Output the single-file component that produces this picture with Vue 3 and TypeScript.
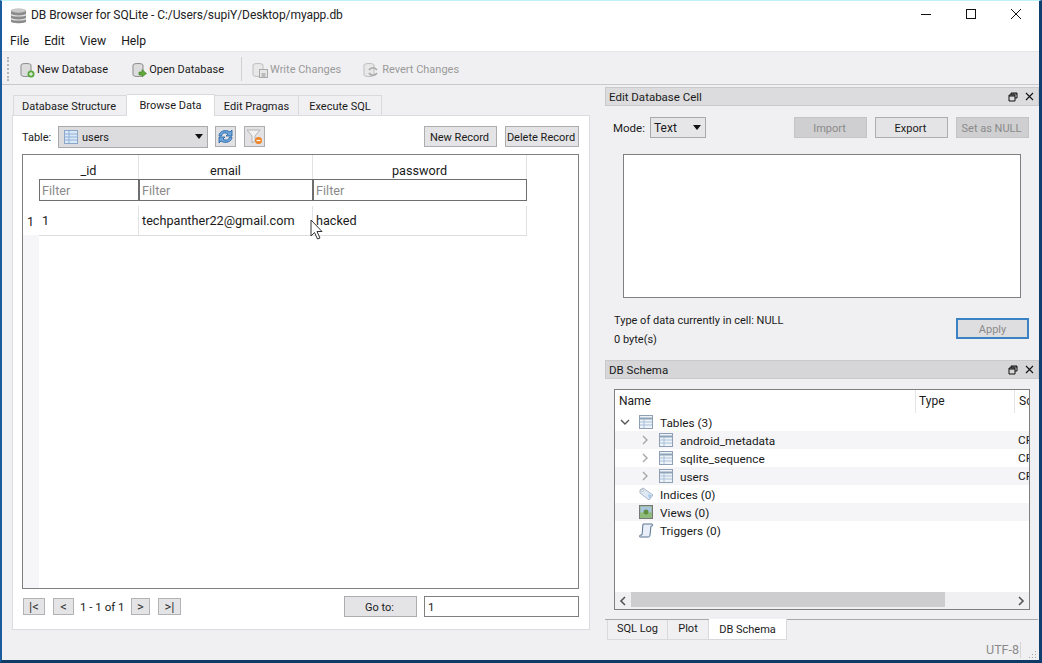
<script setup lang="ts">
const menus: string[] = ['File', 'Edit', 'View', 'Help']
const tabs = [
  { label: 'Database Structure', w: 114, on: false },
  { label: 'Browse Data', w: 88, on: true },
  { label: 'Edit Pragmas', w: 84, on: false },
  { label: 'Execute SQL', w: 83, on: false },
]
const children: string[] = ['android_metadata', 'sqlite_sequence', 'users']
</script>

<template>
  <div class="win">
    <header class="title">
      <svg class="appicon" width="17" height="18" viewBox="0 0 17 18">
        <path d="M1 3.500C1 1.800 16 1.800 16 3.500V14.500C16 16.800 1 16.800 1 14.500Z" fill="#8b8b8b" />
        <ellipse cx="8.500" cy="3.500" rx="7.500" ry="2.200" fill="#c9c9c9" />
        <path d="M1 7.500C3 9.500 14 9.500 16 7.500M1 11.500C3 13.500 14 13.500 16 11.500" stroke="#e4e4e4" stroke-width="1.200" fill="none" />
      </svg>
      <span class="titletext">DB Browser for SQLite - C:/Users/supiY/Desktop/myapp.db</span>
      <div class="winctl">
        <svg width="12" height="12" viewBox="0 0 12 12"><path d="M1 6.500H11" stroke="#111" stroke-width="1" /></svg>
        <svg width="12" height="12" viewBox="0 0 12 12"><rect x="1.500" y="1.500" width="9" height="9" fill="none" stroke="#111" /></svg>
        <svg width="12" height="12" viewBox="0 0 12 12"><path d="M1 1L11 11M11 1L1 11" stroke="#111" stroke-width="1" /></svg>
      </div>
    </header>

    <nav class="menu">
      <span v-for="m in menus" :key="m">{{ m }}</span>
    </nav>

    <div class="toolbar">
      <i class="grip"></i>
      <span class="tool t1">
        <svg width="15" height="16" viewBox="0 0 15 16">
          <path d="M1 3C1 1 11 1 11 3V13C11 15 1 15 1 13Z" fill="#dcdcdc" stroke="#8a8a8a" />
          <circle cx="11" cy="12" r="3.500" fill="#58a83f" />
          <path d="M9 12H13M11 10V14" stroke="#fff" />
        </svg>
        New Database
      </span>
      <span class="tool t2">
        <svg width="15" height="16" viewBox="0 0 15 16">
          <path d="M1 3C1 1 11 1 11 3V13C11 15 1 15 1 13Z" fill="#dcdcdc" stroke="#8a8a8a" />
          <path d="M7 10H10V7.500L14.500 11.500L10 15V13H7Z" fill="#62a83c" stroke="#3f7d28" stroke-width=".6" />
        </svg>
        Open Database
      </span>
      <i class="sep"></i>
      <span class="tool t3 off">
        <svg width="16" height="16" viewBox="0 0 16 16">
          <path d="M1 3C1 1 11 1 11 3V13C11 15 1 15 1 13Z" fill="#e8e8e8" stroke="#bdbdbd" />
          <rect x="7.500" y="7.500" width="8" height="8" fill="#e6e6e6" stroke="#aaa" />
          <rect x="9.500" y="11" width="4" height="4" fill="#bbb" />
        </svg>
        Write Changes
      </span>
      <span class="tool t4 off">
        <svg width="16" height="16" viewBox="0 0 16 16">
          <path d="M1 3C1 1 11 1 11 3V13C11 15 1 15 1 13Z" fill="#e8e8e8" stroke="#bdbdbd" />
          <path d="M6 8C8 5 12 5 14 8M14 11C12 14 8 14 6 11" fill="none" stroke="#a8a8a8" stroke-width="1.600" />
        </svg>
        Revert Changes
      </span>
    </div>

    <main class="body">
      <section class="left">
        <div class="tabs">
          <span v-for="t in tabs" :key="t.label" class="tab" :class="{ on: t.on }" :style="{ width: t.w + 'px' }">{{ t.label }}</span>
        </div>
        <div class="panel">
          <div class="controls">
            <label>Table:</label>
            <div class="combo tablecombo">
              <svg width="14" height="14" viewBox="0 0 14 14">
                <rect x=".5" y=".5" width="13" height="13" fill="#dbe8f7" stroke="#8aa6c8" />
                <path d="M1 4H13M1 7H13M1 10H13M5 1V13" stroke="#8fb0d8" />
              </svg>
              <span>users</span>
              <b class="caret"></b>
            </div>
            <button class="sq refresh">
              <svg width="17" height="17" viewBox="0 0 17 17">
                <path d="M2 8C2 3 9 1 13 4L15 2V8H9L11 6C8 4 5 5 4.500 8Z" fill="#6ea6de" stroke="#215f9f" stroke-width=".8" />
                <path d="M15 9C15 14 8 16 4 13L2 15V9H8L6 11C9 13 12 12 12.500 9Z" fill="#6ea6de" stroke="#215f9f" stroke-width=".8" />
              </svg>
            </button>
            <button class="sq clear">
              <svg width="17" height="17" viewBox="0 0 17 17">
                <path d="M1 2H14L9 8V13L6 15V8Z" fill="#f1f1f1" stroke="#b5b5b5" />
                <circle cx="12.500" cy="12.500" r="3.500" fill="#ee8326" />
                <path d="M10.500 12.500H14.500" stroke="#fff" stroke-width="1.300" />
              </svg>
            </button>
            <button class="btn rec1">New Record</button>
            <button class="btn rec2">Delete Record</button>
          </div>

          <div class="frame">
            <div class="rowhead">
              <div class="rh-top"></div>
              <div class="rh-one">1</div>
            </div>
            <div class="grid">
              <div class="hcell">_id</div>
              <div class="hcell">email</div>
              <div class="hcell">password</div>
              <div class="fcell">Filter</div>
              <div class="fcell">Filter</div>
              <div class="fcell">Filter</div>
              <div class="gap"></div>
              <div class="dcell">1</div>
              <div class="dcell">techpanther22@gmail.com</div>
              <div class="dcell">hacked</div>
            </div>
            <svg class="cursor" width="13" height="21" viewBox="0 0 13 21">
              <path d="M1 1V17L4.500 13.500L7.500 20L10 19L7 12.500H12Z" fill="#fff" stroke="#333" stroke-width="1" />
            </svg>
          </div>

          <div class="pager">
            <button class="pg p1">|&lt;</button>
            <button class="pg p2">&lt;</button>
            <span class="count">1 - 1 of 1</span>
            <button class="pg p3">&gt;</button>
            <button class="pg p4">&gt;|</button>
            <button class="btn goto">Go to:</button>
            <div class="gotoinput">1</div>
          </div>
        </div>
      </section>

      <aside class="right">
        <div class="dockhead">
          <span>Edit Database Cell</span>
          <span class="dockctl">
            <svg width="10" height="10" viewBox="0 0 10 10"><path d="M3 3V1H9V6H7M1 3H7V9H1Z M1 4H7M3 2H9" fill="none" stroke="#111" /></svg>
            <svg width="9" height="9" viewBox="0 0 9 9"><path d="M1 1L8 8M8 1L1 8" stroke="#111" stroke-width="1.100" /></svg>
          </span>
        </div>
        <div class="moderow">
          <label>Mode:</label>
          <div class="combo modecombo"><span>Text</span><b class="caret"></b></div>
          <button class="btn cellbtn dis push">Import</button>
          <button class="btn cellbtn">Export</button>
          <button class="btn cellbtn dis">Set as NULL</button>
        </div>
        <div class="editor"></div>
        <div class="inforow">
          <div class="infotext">
            <div>Type of data currently in cell: NULL</div>
            <div>0 byte(s)</div>
          </div>
          <button class="btn apply">Apply</button>
        </div>

        <div class="dockhead schema">
          <span>DB Schema</span>
          <span class="dockctl">
            <svg width="10" height="10" viewBox="0 0 10 10"><path d="M3 3V1H9V6H7M1 3H7V9H1Z M1 4H7M3 2H9" fill="none" stroke="#111" /></svg>
            <svg width="9" height="9" viewBox="0 0 9 9"><path d="M1 1L8 8M8 1L1 8" stroke="#111" stroke-width="1.100" /></svg>
          </span>
        </div>
        <div class="tree">
          <div class="treehead">
            <span class="th-name">Name</span>
            <span class="th-type">Type</span>
            <span class="th-sc">Sc</span>
          </div>
          <div class="treebody">
            <div class="node">
              <svg class="arrow" width="10" height="10" viewBox="0 0 10 10"><path d="M1 3L5 7L9 3" fill="none" stroke="#555" stroke-width="1.400" /></svg>
              <svg class="ticon" width="14" height="14" viewBox="0 0 14 14">
                <rect x=".5" y=".5" width="13" height="13" fill="#eef3f8" stroke="#8f9fb5" />
                <path d="M1 3.500H13" stroke="#8fa3b8" stroke-width="2" />
                <path d="M1 7H13M1 10H13M5 4V13" stroke="#a9c0d8" />
              </svg>
              <span>Tables (3)</span>
            </div>
            <div v-for="(c, i) in children" :key="c" class="node child" :class="{ alt: i !== 1 }">
              <svg class="arrow" width="10" height="10" viewBox="0 0 10 10"><path d="M3 1L7 5L3 9" fill="none" stroke="#a6a6a6" stroke-width="1.400" /></svg>
              <svg class="ticon" width="14" height="14" viewBox="0 0 14 14">
                <rect x=".5" y=".5" width="13" height="13" fill="#eef3f8" stroke="#8f9fb5" />
                <path d="M1 3.500H13" stroke="#8fa3b8" stroke-width="2" />
                <path d="M1 7H13M1 10H13M5 4V13" stroke="#a9c0d8" />
              </svg>
              <span>{{ c }}</span>
              <em>CF</em>
            </div>
            <div class="node">
              <i class="arrow blank"></i>
              <svg class="ticon wide" width="15" height="14" viewBox="0 0 15 14">
                <path d="M1 3L4 1L14 8L10 13L1 6Z" fill="#dfe9f5" stroke="#a9b8c8" />
                <path d="M9 7L13 8.500L10 12Z" fill="#a9c8ea" />
                <circle cx="3.500" cy="3.500" r="1" fill="#fff" stroke="#999" stroke-width=".5" />
              </svg>
              <span>Indices (0)</span>
            </div>
            <div class="node alt">
              <i class="arrow blank"></i>
              <svg class="ticon" width="14" height="14" viewBox="0 0 14 14">
                <rect x=".5" y=".5" width="13" height="13" fill="#8fbb7a" stroke="#777" />
                <rect x="1.500" y="1.500" width="11" height="6" fill="#a9c4dc" />
                <circle cx="7" cy="7" r="2.500" fill="#5f8f3f" />
              </svg>
              <span>Views (0)</span>
            </div>
            <div class="node">
              <i class="arrow blank"></i>
              <svg class="ticon wide" width="15" height="15" viewBox="0 0 15 15">
                <path d="M4 1H13C14 1 14 3 13 3H12L11 12C11 14 10 14 9 14H1C0 14 0 12 2 12H3Z" fill="#e8eff8" stroke="#5a7391" />
              </svg>
              <span>Triggers (0)</span>
            </div>
          </div>
          <div class="hscroll">
            <svg width="16" height="16" viewBox="0 0 16 16"><path d="M10 4L6 8L10 12" fill="none" stroke="#555" stroke-width="1.600" /></svg>
            <div class="track"><div class="thumb"></div></div>
            <svg width="16" height="16" viewBox="0 0 16 16"><path d="M6 4L10 8L6 12" fill="none" stroke="#555" stroke-width="1.600" /></svg>
          </div>
        </div>
        <div class="dtabs">
          <span class="dtab d1">SQL Log</span>
          <span class="dtab d2">Plot</span>
          <span class="dtab d3">DB Schema</span>
        </div>
      </aside>
    </main>

    <footer class="status">
      <span class="enc">UTF-8</span>
      <svg width="9" height="9" viewBox="0 0 9 9" class="sizegrip">
        <path d="M7 1h1v1H7zM4 4h1v1H4zM7 4h1v1H7zM1 7h1v1H1zM4 7h1v1H4zM7 7h1v1H7z" fill="#a9a9a9" />
      </svg>
    </footer>
  </div>
</template>

<style scoped>
* { box-sizing: border-box; }
.win {
  width: 1042px; height: 663px; overflow: hidden; position: relative;
  display: flex; flex-direction: column;
  background: #f0f0f2;
  border-top: 1px solid #bdf2f6;
  border-left: 2px solid #1c5c9e;
  border-right: 3px solid #0e3f6e;
  border-bottom: 3px solid #0d3b66;
  font-family: Roboto, "Noto Sans", sans-serif;
  font-size: 12px;
  color: #1a1a1a;
}
.title {
  height: 29px; flex: none; background: #fff;
  display: flex; align-items: center; padding-left: 8px;
}
.appicon { margin-right: 4px; }
.titletext { font-size: 12px; letter-spacing: -.06px; color: #222; margin-top: -1px; }
.winctl { margin-left: auto; display: flex; gap: 33px; padding-right: 17px; margin-top: -3px; }
.menu {
  height: 21px; flex: none; background: #fff;
  display: flex; align-items: center; padding-left: 8px; gap: 15px;
  font-size: 12.200px; padding-top: 1px;
}
.toolbar {
  height: 34px; flex: none; position: relative;
  display: flex; align-items: center;
  border-top: 1px solid #e6e6e8;
  border-bottom: 1px solid #c9c9cb;
  font-size: 11px; padding-top: 3px;
}
.grip { width: 2px; height: 24px; margin-left: 5px; margin-top: -2px; border-left: 2px dotted #b5b5b5; }
.tool { display: flex; align-items: center; gap: 2px; white-space: nowrap; }
.t1 { margin-left: 11px; }
.t2 { margin-left: 24px; }
.sep { width: 1px; height: 24px; background: #d0d0d2; margin-left: 17px; margin-top: -2px; }
.t3 { margin-left: 10px; }
.t4 { margin-left: 22px; gap: 3px; }
.off { color: #9a9a9a; }

.body { flex: 1; display: flex; min-height: 0; }
.left { width: 603px; flex: none; padding: 9px 0 0 10px; }
.tabs { display: flex; padding-left: 1px; height: 21px; align-items: flex-end; }
.tab {
  height: 20px; display: flex; align-items: center; justify-content: center;
  background: #f0f0f2; border: 1px solid #d9d9db; border-bottom: none; border-left: none;
  font-size: 11px; padding-top: 1px;
}
.tab:first-child { border-left: 1px solid #d9d9db; padding-right: 2px; }
.tab.on { height: 22px; background: #fff; border-left: none; margin-bottom: -1px; padding-top: 0; padding-bottom: 1px; position: relative; z-index: 1; }
.panel {
  width: 578px; height: 515px; background: #fff; border: 1px solid #dcdcde;
  padding: 9px 10px 0 9px; display: flex; flex-direction: column;
}
.controls { height: 23px; display: flex; align-items: center; font-size: 11px; flex: none; }
.controls label { width: 36px; padding-top: 1px; }
.combo {
  display: flex; align-items: center; background: #e2e2e4; border: 1px solid #a9a9ab;
  position: relative;
}
.tablecombo { width: 150px; height: 22px; padding-left: 5px; gap: 4px; background: #dcdcde; }
.tablecombo span { padding-top: 1px; }
.modecombo { width: 56px; height: 21px; padding-left: 3px; background: #e6e6e8; font-size: 12px; }
.caret {
  position: absolute; right: 4px; top: 7px; width: 0; height: 0;
  border-left: 4px solid transparent; border-right: 4px solid transparent; border-top: 5px solid #111;
}
.sq {
  width: 21px; height: 21px; padding: 0; margin: 0;
  background: #e2e2e4; border: 1px solid #adadaf;
  display: flex; align-items: center; justify-content: center;
}
.refresh { margin-left: 7px; }
.clear { margin-left: 8px; }
.btn {
  height: 21px; padding: 1px 2px 0 0; background: #e4e4e6; border: 1px solid #adadaf;
  font: inherit; font-size: 11px; color: #1a1a1a; white-space: nowrap;
}
.rec1 { width: 73px; margin-left: auto; }
.rec2 { width: 74px; margin-left: 8px; }

.frame {
  width: 557px; height: 435px; flex: none; margin-top: 6px;
  border: 1px solid #7f7f7f; display: flex; position: relative;
}
.rowhead { width: 16px; flex: none; background: #f6f6f8; }
.rh-top { height: 51px; background: #fff; }
.rh-one { height: 29px; background: #fff; display: flex; align-items: center; justify-content: center; font-size: 12.500px; padding-top: 1px; padding-right: 1px; }
.grid {
  display: grid; grid-template-columns: 100px 174px 214px;
  grid-template-rows: 24px 22px 5px 30px; align-content: start; height: 81px;
  font-size: 12.650px;
}
.hcell {
  display: flex; align-items: flex-end; justify-content: center;
  border-right: 1px solid #e2e2e4; line-height: 17px;
}
.fcell {
  border: 1px solid #6e6e6e; padding-left: 2px; display: flex; align-items: center;
  color: #8a8a8a; background: #fff;
}
.gap { grid-column: 1 / 4; }
.dcell {
  display: flex; align-items: center; padding-left: 3px;
  border-right: 1px solid #e2e2e4; border-bottom: 1px solid #dedee0; white-space: nowrap;
}
.cursor { position: absolute; left: 287px; top: 64px; }

.pager { display: flex; align-items: center; height: 21px; margin-top: 7px; padding-left: 1px; flex: none; font-size: 11.500px; }
.pg {
  height: 17px; padding: 0; background: #e4e4e6; border: 1px solid #b3b3b5;
  font: inherit; font-size: 13px; line-height: 13px; color: #333;
}
.p1 { width: 22px; }
.p2 { width: 21px; margin-left: 8px; }
.count { width: 45px; margin-left: 6px; white-space: nowrap; }
.p3 { width: 19px; margin-left: 6px; }
.p4 { width: 23px; margin-left: 8px; }
.goto { width: 73px; margin-left: 163px; }
.gotoinput {
  width: 155px; height: 21px; margin-left: 7px; border: 1px solid #7f7f7f; background: #fff;
  display: flex; align-items: center; padding-left: 3px; font-size: 11.500px;
}

.right { flex: 1; padding: 2px 0 0 0; display: flex; flex-direction: column; min-width: 0; }
.dockhead {
  height: 19px; flex: none; background: #dcdcde; border: 1px solid #c9c9cb;
  display: flex; align-items: center; justify-content: space-between; padding: 0 3px;
  font-size: 11.500px;
}
.schema { background: #d6d6d8; margin-top: 10px; }
.dockctl { display: flex; align-items: center; gap: 7px; padding-right: 1px; }
.moderow { height: 21px; margin-top: 11px; display: flex; align-items: center; padding-left: 8px; padding-right: 10px; flex: none; font-size: 11.500px; }
.moderow label { width: 37px; }
.cellbtn { width: 73px; margin-left: 8px; }
.cellbtn.push { margin-left: auto; }
.dis { background: #cfcfd1; color: #8a8a8a; border-color: #c4c4c6; }
.editor { width: 398px; height: 144px; flex: none; margin: 16px 0 0 18px; border: 1px solid #7f7f7f; background: #fff; }
.inforow { height: 41px; flex: none; margin-top: 11px; display: flex; padding-left: 9px; padding-right: 10px; justify-content: space-between; font-size: 11px; }
.infotext { display: flex; flex-direction: column; gap: 2px; line-height: 17px; margin-top: 3px; }
.apply {
  width: 73px; height: 21px; margin-top: 9px; padding: 1px 0 0; background: #dedee0; border: 2px solid #3b82c4; color: #8a8a8a;
}
.tree {
  width: 416px; height: 221px; flex: none; margin: 10px 0 0 9px; border: 1px solid #7f7f7f; background: #fff;
  display: flex; flex-direction: column; font-size: 12px;
}
.treehead { height: 23px; flex: none; display: flex; align-items: center; position: relative; }
.treehead span { position: absolute; top: 4px; }
.th-name { left: 4px; }
.th-type { left: 304px; }
.th-type::before { content: ""; position: absolute; left: -4px; top: -4px; height: 23px; width: 1px; background: #e4e4e6; }
.th-sc { left: 404px; width: 10px; overflow: hidden; }
.treehead::after { content: ""; position: absolute; left: 399px; top: 0; height: 23px; width: 1px; background: #e4e4e6; }
.treebody { flex: 1; overflow: hidden; }
.node { height: 18px; display: flex; align-items: center; position: relative; padding-left: 5px; font-size: 11.800px; }
.node span { padding-top: 1px; }
.node.alt { background: #f5f5f7; }
.arrow { width: 10px; flex: none; }
.blank { display: block; }
.ticon { margin-left: 9px; margin-right: 7px; flex: none; }
.ticon.wide { margin-right: 6px; }
.child { padding-left: 25px; }
.node em { position: absolute; left: 403px; font-style: normal; width: 11px; overflow: hidden; }
.hscroll { height: 17px; flex: none; background: #f0f0f2; display: flex; align-items: center; }
.track { flex: 1; height: 17px; }
.thumb { width: 314px; height: 15px; background: #cdcdcf; }
.dtabs {
  height: 21px; flex: none; margin-top: 9px; width: 433px; border-top: 1px solid #a9a9ab;
  display: flex; padding-left: 2px; font-size: 11px;
}
.dtab { display: flex; align-items: center; justify-content: center; height: 20px; padding-bottom: 2px; border: 1px solid #d9d9db; border-top: none; border-left: none; }
.d1 { width: 61px; border-left: 1px solid #d9d9db; }
.d2 { width: 41px; }
.d3 { width: 78px; height: 21px; margin-top: -1px; background: #fff; padding: 1px 0 0; }
.status { height: 20px; flex: none; position: relative; display: flex; justify-content: flex-end; align-items: center; padding-right: 18px; font-size: 12.500px; color: #8a8a8a; }
.enc { border-right: 1px solid #d6d6d8; padding-right: 1px; line-height: 16px; }
.sizegrip { position: absolute; right: 2px; bottom: 1px; }
</style>
